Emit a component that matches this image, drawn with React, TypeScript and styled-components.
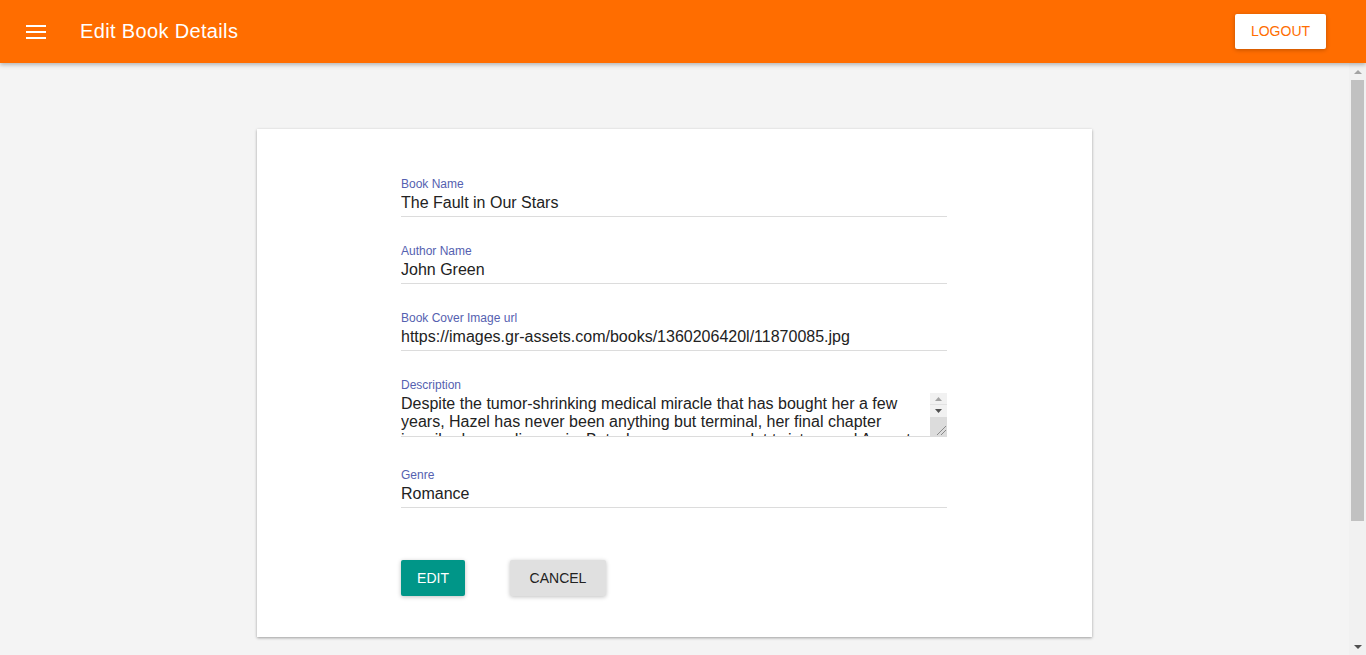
import React from "react";
import styled, { createGlobalStyle } from "styled-components";

const Global = createGlobalStyle`
  html, body { margin: 0; padding: 0; height: 100%; overflow: hidden; }
  body { font-family: "Liberation Sans", Arial, sans-serif; }
  #root { height: 100%; }
`;

const Shell = styled.div`
  height: 100vh;
  display: flex;
  flex-direction: column;
  background: #f4f4f4;
`;

const AppBar = styled.header`
  flex: 0 0 63px;
  background: #ff6d00;
  display: flex;
  align-items: center;
  padding: 0 40px 0 26px;
  box-shadow: 0 2px 4px rgba(0, 0, 0, 0.25);
  position: relative;
  z-index: 2;
`;

const MenuButton = styled.button`
  border: 0;
  background: none;
  padding: 0;
  width: 20px;
  height: 14px;
  display: flex;
  cursor: pointer;
`;

const Title = styled.h1`
  margin: 0 0 0 34px;
  font-size: 20px;
  font-weight: 400;
  color: #fff;
  flex: 1;
  letter-spacing: 0.35px;
`;

const LogoutButton = styled.button`
  width: 91px;
  height: 35px;
  margin-top: -1px;
  border: 0;
  border-radius: 2px;
  background: #fff;
  color: #ff6d00;
  font-family: "Liberation Sans", Arial, sans-serif;
  font-size: 14px;
  text-transform: uppercase;
  box-shadow: 0 1px 4px rgba(0, 0, 0, 0.25);
  cursor: pointer;
`;

const Body = styled.div`
  flex: 1;
  min-height: 0;
  display: flex;
`;

const Main = styled.main`
  flex: 1;
  overflow-y: auto;
  padding: 66px 0 175px;
  scrollbar-width: none;
`;

/* scrollbar drawing */
const ScrollBar = styled.div<{ $width: number }>`
  flex: 0 0 ${(p) => p.$width}px;
  display: flex;
  flex-direction: column;
  background: #f1f1f1;
`;

const ScrollArrow = styled.div<{ $h: number; $sep?: boolean }>`
  flex: 0 0 ${(p) => p.$h}px;
  display: flex;
  align-items: center;
  justify-content: center;
  border-bottom: ${(p) => (p.$sep ? "1px solid #e2e2e2" : "0")};
  box-sizing: border-box;
`;

const ScrollTrack = styled.div`
  flex: 1;
  display: flex;
  flex-direction: column;
  padding: 0 2px;
`;

const ScrollThumb = styled.div`
  background: #c1c1c1;
`;

const Resizer = styled.div`
  flex: 1;
  background: #dcdcdc;
  display: flex;
  align-items: flex-end;
  justify-content: flex-end;
`;

const Tri = ({ dir, color, w = 8, h = 4 }: { dir: "up" | "down"; color: string; w?: number; h?: number }) => (
  <svg width={w} height={h} viewBox={`0 0 ${w} ${h}`}>
    <polygon
      points={dir === "up" ? `0,${h} ${w / 2},0 ${w},${h}` : `0,0 ${w / 2},${h} ${w},0`}
      fill={color}
    />
  </svg>
);

const Card = styled.section`
  width: 835px;
  margin: 0 auto;
  background: #fff;
  box-shadow: 0 1px 3px rgba(0, 0, 0, 0.25), 0 1px 2px rgba(0, 0, 0, 0.12);
  padding: 48px 1px 41px 0;
  box-sizing: border-box;
  display: flex;
  flex-direction: column;
  align-items: center;
`;

const Form = styled.form`
  width: 546px;
  display: flex;
  flex-direction: column;
`;

const Field = styled.div<{ $gap?: number }>`
  display: flex;
  flex-direction: column;
  margin-bottom: ${(p) => p.$gap ?? 27}px;
`;

const Label = styled.label`
  font-size: 12px;
  line-height: 14px;
  color: #5561b0;
  margin-bottom: 1px;
`;

const Input = styled.input`
  border: 0;
  border-bottom: 1px solid #dcdcdc;
  outline: none;
  padding: 1px 0 3px;
  box-sizing: border-box;
  height: 25px;
  font-family: "Liberation Sans", Arial, sans-serif;
  font-size: 16px;
  line-height: 20px;
  color: #222;
  background: transparent;
`;

const AreaBox = styled.div`
  display: flex;
  height: 44px;
  border-bottom: 1px solid #dcdcdc;
  box-sizing: border-box;
`;

const TextArea = styled.textarea`
  flex: 1;
  border: 0;
  outline: none;
  resize: none;
  padding: 2px 0 0;
  margin: 0;
  box-sizing: border-box;
  font-family: "Liberation Sans", Arial, sans-serif;
  font-size: 16px;
  line-height: 18px;
  color: #222;
  background: transparent;
  overflow: hidden;
`;

const Actions = styled.div`
  display: flex;
  gap: 45px;
  margin-top: 52px;
`;

const ActionButton = styled.button<{ $primary?: boolean }>`
  height: 36px;
  padding: 0 16px;
  min-width: ${(p) => (p.$primary ? 64 : 96)}px;
  border: 0;
  border-radius: 2px;
  background: ${(p) => (p.$primary ? "#009688" : "#e0e0e0")};
  color: ${(p) => (p.$primary ? "#fff" : "#222")};
  font-family: "Liberation Sans", Arial, sans-serif;
  font-size: 14px;
  text-transform: uppercase;
  box-shadow: 0 1px 4px rgba(0, 0, 0, 0.25);
  cursor: pointer;
`;

const description =
  "Despite the tumor-shrinking medical miracle that has bought her a few years, Hazel has never been anything but terminal, her final chapter inscribed upon diagnosis. But when a gorgeous plot twist named Augustus Waters suddenly appears at Cancer Kid Support Group, Hazel's story is about to be completely rewritten.";

export default function App() {
  const viewport = 592;
  const content = 749;
  const thumbPct = (viewport / content) * 100;
  return (
    <>
      <Global />
      <Shell>
        <AppBar>
          <MenuButton aria-label="menu">
            <svg width="20" height="14" viewBox="0 0 20 14">
              <rect x="0" y="0" width="20" height="2" fill="#fff" />
              <rect x="0" y="6" width="20" height="2" fill="#fff" />
              <rect x="0" y="12" width="20" height="2" fill="#fff" />
            </svg>
          </MenuButton>
          <Title>Edit Book Details</Title>
          <LogoutButton>Logout</LogoutButton>
        </AppBar>
        <Body>
          <Main>
            <Card>
              <Form onSubmit={(e) => e.preventDefault()}>
                <Field>
                  <Label>Book Name</Label>
                  <Input defaultValue="The Fault in Our Stars" />
                </Field>
                <Field>
                  <Label>Author Name</Label>
                  <Input defaultValue="John Green" />
                </Field>
                <Field>
                  <Label>Book Cover Image url</Label>
                  <Input defaultValue="https://images.gr-assets.com/books/1360206420l/11870085.jpg" />
                </Field>
                <Field $gap={31}>
                  <Label>Description</Label>
                  <AreaBox>
                    <TextArea defaultValue={description} />
                    <ScrollBar $width={17}>
                      <ScrollArrow $h={12} $sep>
                        <Tri dir="up" color="#a3a3a3" w={7} h={4} />
                      </ScrollArrow>
                      <ScrollArrow $h={12}>
                        <Tri dir="down" color="#505050" w={7} h={4} />
                      </ScrollArrow>
                      <Resizer>
                        <svg width="12" height="12" viewBox="0 0 12 12">
                          <line x1="2" y1="11" x2="11" y2="2" stroke="#8a8a8a" strokeWidth="1" />
                          <line x1="6" y1="11" x2="11" y2="6" stroke="#8a8a8a" strokeWidth="1" />
                        </svg>
                      </Resizer>
                    </ScrollBar>
                  </AreaBox>
                </Field>
                <Field $gap={0}>
                  <Label>Genre</Label>
                  <Input defaultValue="Romance" />
                </Field>
                <Actions>
                  <ActionButton $primary>Edit</ActionButton>
                  <ActionButton type="button">Cancel</ActionButton>
                </Actions>
              </Form>
            </Card>
          </Main>
          <ScrollBar $width={17}>
            <ScrollArrow $h={17}>
              <Tri dir="up" color="#a3a3a3" w={8} h={4} />
            </ScrollArrow>
            <ScrollTrack>
              <ScrollThumb style={{ height: `${thumbPct}%` }} />
            </ScrollTrack>
            <ScrollArrow $h={17}>
              <Tri dir="down" color="#505050" w={8} h={4} />
            </ScrollArrow>
          </ScrollBar>
        </Body>
      </Shell>
    </>
  );
}
